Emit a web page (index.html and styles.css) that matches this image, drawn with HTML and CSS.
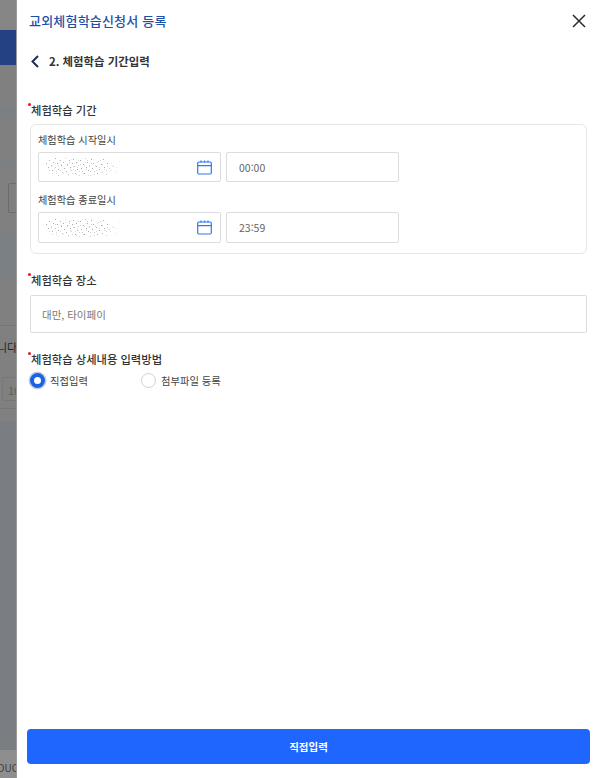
FILE: index.html
```html
<!DOCTYPE html>
<html lang="ko">
<head>
    <meta charset="UTF-8">
    <meta name="viewport" content="width=device-width, initial-scale=1.0">
    <title>교외체험학습신청서 등록</title>
    <link rel="stylesheet" href="styles.css">
</head>
<body>
    <svg class="defs" width="0" height="0">
        <symbol id="noise" viewBox="0 0 80 24">
            <g fill="#8a8a8a">
                <rect x="3" y="8" width="1" height="1"/><rect x="5" y="12" width="1" height="1"/><rect x="6" y="5" width="1" height="1"/>
                <rect x="8" y="10" width="1" height="1" opacity=".6"/><rect x="9" y="15" width="1" height="1"/><rect x="10" y="7" width="1" height="1"/>
                <rect x="12" y="3" width="1" height="1"/><rect x="12" y="12" width="1" height="1" opacity=".7"/><rect x="13" y="18" width="1" height="1" opacity=".5"/>
                <rect x="14" y="8" width="1" height="1"/><rect x="15" y="14" width="1" height="1"/><rect x="17" y="5" width="1" height="1" opacity=".7"/>
                <rect x="18" y="10" width="1" height="1"/><rect x="19" y="17" width="1" height="1" opacity=".6"/><rect x="20" y="7" width="1" height="1"/>
                <rect x="21" y="13" width="1" height="1"/><rect x="22" y="3" width="1" height="1" opacity=".5"/><rect x="23" y="16" width="1" height="1"/>
                <rect x="24" y="9" width="1" height="1"/><rect x="25" y="19" width="1" height="1" opacity=".5"/><rect x="26" y="5" width="1" height="1"/>
                <rect x="27" y="12" width="1" height="1"/><rect x="28" y="15" width="1" height="1" opacity=".6"/><rect x="29" y="8" width="1" height="1"/>
                <rect x="30" y="4" width="1" height="1"/><rect x="31" y="11" width="1" height="1" opacity=".7"/><rect x="32" y="18" width="1" height="1"/>
                <rect x="33" y="7" width="1" height="1"/><rect x="34" y="14" width="1" height="1"/><rect x="35" y="10" width="1" height="1" opacity=".6"/>
                <rect x="36" y="20" width="1" height="1" opacity=".5"/><rect x="37" y="5" width="1" height="1"/><rect x="38" y="13" width="1" height="1"/>
                <rect x="39" y="16" width="1" height="1" opacity=".7"/><rect x="40" y="9" width="1" height="1"/><rect x="41" y="18" width="1" height="1"/>
                <rect x="42" y="3" width="1" height="1" opacity=".6"/><rect x="43" y="12" width="1" height="1"/><rect x="44" y="7" width="1" height="1"/>
                <rect x="45" y="15" width="1" height="1"/><rect x="46" y="10" width="1" height="1" opacity=".6"/><rect x="47" y="20" width="1" height="1" opacity=".5"/>
                <rect x="48" y="4" width="1" height="1"/><rect x="49" y="13" width="1" height="1"/><rect x="50" y="8" width="1" height="1"/>
                <rect x="51" y="16" width="1" height="1" opacity=".7"/><rect x="53" y="11" width="1" height="1"/><rect x="54" y="18" width="1" height="1"/>
                <rect x="55" y="6" width="1" height="1" opacity=".6"/><rect x="56" y="14" width="1" height="1"/><rect x="58" y="9" width="1" height="1"/>
                <rect x="59" y="17" width="1" height="1" opacity=".6"/><rect x="60" y="4" width="1" height="1"/><rect x="61" y="12" width="1" height="1"/>
                <rect x="63" y="15" width="1" height="1" opacity=".5"/><rect x="64" y="8" width="1" height="1"/><rect x="66" y="13" width="1" height="1" opacity=".5"/>
                <rect x="70" y="11" width="1" height="1" opacity=".5"/><rect x="73" y="17" width="1" height="1" opacity=".4"/>
            </g>
        </symbol>
        <symbol id="calendar" viewBox="0 0 15 15">
            <rect x=".7" y="2" width="13.6" height="12" rx="1.2" fill="none" stroke="#2f78f0" stroke-width="1.2"/>
            <path d="M.7 5.6h13.6M4 .6v1.8M7.5 .6v1.8M11 .6v1.8" fill="none" stroke="#2f78f0" stroke-width="1.2"/>
        </symbol>
    </svg>

    <div class="page">
        <div class="backdrop">
            <div class="band band-top"></div>
            <div class="band band-blue"></div>
            <div class="band band-grey h43"></div>
            <div class="band band-cool h12"></div>
            <div class="band band-grey h40"></div>
            <div class="band band-cool h7"></div>
            <div class="band band-grey band-box"><span class="ghost-box"></span></div>
            <div class="band band-cool h46"></div>
            <div class="band band-grey band-text">
                <span class="ghost-line line-one"></span>
                <span class="ghost-text">니다.</span>
                <span class="ghost-input">10</span>
                <span class="ghost-line line-two"></span>
            </div>
            <div class="band band-dark"></div>
            <div class="band band-foot">OUC</div>
        </div>

        <div class="panel">
            <div class="panel-header">
                <h1 class="panel-title">교외체험학습신청서 등록</h1>
                <svg class="icon-close" viewBox="0 0 14 14"><path d="M1 1l12 12M13 1L1 13"/></svg>
            </div>
            <div class="step">
                <svg class="icon-back" viewBox="0 0 8 13"><path d="M7 1L1.5 6.5 7 12"/></svg>
                <span>2. 체험학습 기간입력</span>
            </div>

            <div class="form">
                <div class="label label-period">체험학습 기간</div>
                <div class="card">
                    <div class="sub-label">체험학습 시작일시</div>
                    <div class="input-row">
                        <div class="input date">
                            <svg class="noise"><use href="#noise"/><use class="noise-layer" href="#noise" transform="translate(3 24) scale(1 -1)"/></svg>
                            <svg class="icon-calendar"><use href="#calendar"/></svg>
                        </div>
                        <div class="input time">00:00</div>
                    </div>
                    <div class="sub-label second">체험학습 종료일시</div>
                    <div class="input-row">
                        <div class="input date tall">
                            <svg class="noise"><use href="#noise"/><use class="noise-layer" href="#noise" transform="translate(3 24) scale(1 -1)"/></svg>
                            <svg class="icon-calendar"><use href="#calendar"/></svg>
                        </div>
                        <div class="input time tall">23:59</div>
                    </div>
                </div>

                <div class="label label-place">체험학습 장소</div>
                <div class="input place">대만, 타이페이</div>

                <div class="label label-method">체험학습 상세내용 입력방법</div>
                <div class="radios">
                    <div class="radio-item first"><span class="radio checked"></span>직접입력</div>
                    <div class="radio-item"><span class="radio"></span>첨부파일 등록</div>
                </div>
            </div>

            <button class="submit">직접입력</button>
        </div>
    </div>
</body>
</html>
```

FILE: styles.css
```css
* {
    box-sizing: border-box;
}
html, body {
    height: 100%;
}
body {
    margin: 0;
    font-family: "Noto Sans CJK KR", "Noto Sans", sans-serif;
    background: #fff;
    overflow: hidden;
}
.defs {
    display: none;
}
.page {
    display: flex;
    height: 778px;
}

/* dimmed page behind the drawer */
.backdrop {
    width: 17px;
    flex-shrink: 0;
    display: flex;
    flex-direction: column;
    overflow: hidden;
    border-right: 1px solid #9a9a9a;
}
.band {
    position: relative;
    white-space: nowrap;
}
.band-top {
    height: 30px;
    background: #868686;
}
.band-blue {
    height: 35px;
    background: #234183;
}
.band-grey {
    background: #808080;
}
.band-cool {
    background: #7b8084;
}
.h43 { height: 43px; }
.h12 { height: 12px; }
.h40 { height: 40px; }
.h7 { height: 7px; }
.h46 { height: 46px; }
.band-box {
    height: 65px;
}
.ghost-box {
    position: absolute;
    left: 8px;
    top: 16px;
    width: 20px;
    height: 30px;
    border: 1px solid #6c6c6c;
    border-radius: 2px;
}
.band-text {
    height: 143px;
}
.ghost-line {
    position: absolute;
    left: 0;
    right: 0;
    border-top: 1px solid #767676;
}
.line-one {
    top: 47px;
}
.line-two {
    top: 130px;
}
.ghost-text {
    position: absolute;
    left: -3px;
    top: 61px;
    font-size: 11px;
    color: #252525;
}
.ghost-input {
    position: absolute;
    left: 2px;
    top: 99px;
    width: 30px;
    height: 24px;
    padding-left: 5px;
    font-size: 11px;
    line-height: 24px;
    color: #5c5c5c;
    border: 1px solid #777;
    border-radius: 2px;
}
.band-dark {
    flex: 1;
    background: #7a7e82;
}
.band-foot {
    height: 28px;
    padding-top: 10px;
    font-size: 10px;
    text-indent: -3px;
    color: #3f3f3f;
    background: #8e8e8e;
}

/* drawer */
.panel {
    flex: 1;
    display: flex;
    flex-direction: column;
    padding: 0 10px 14px;
    background: #fff;
}
.panel-header {
    display: flex;
    justify-content: space-between;
    align-items: center;
    height: 42px;
    padding: 0 4px 0 2px;
}
.panel-title {
    margin: -2px 0 0;
    font-size: 13px;
    font-weight: 500;
    letter-spacing: .2px;
    color: #1f50a8;
}
.icon-close {
    width: 14px;
    height: 14px;
    fill: none;
    stroke: #2b2b2b;
    stroke-width: 1.5;
}
.step {
    display: flex;
    align-items: center;
    height: 38px;
    padding-left: 4px;
    font-size: 11.4px;
    font-weight: 700;
    color: #333;
}
.icon-back {
    width: 8px;
    height: 13px;
    margin-right: 10px;
    fill: none;
    stroke: #1c2f4f;
    stroke-width: 2;
}
.form {
    flex: 1;
    padding: 0 3px;
}
.label {
    position: relative;
    padding-left: 1px;
    font-size: 11.3px;
    font-weight: 500;
    line-height: 18px;
    color: #333;
}
.label::before {
    content: "";
    position: absolute;
    left: -2px;
    top: 2px;
    width: 3px;
    height: 3px;
    border-radius: 50%;
    background: #f01020;
}
.label-period {
    margin-top: 21px;
}
.label-place {
    margin-top: 17px;
}
.label-method {
    margin-top: 17px;
}
.card {
    margin-top: 5px;
    height: 130px;
    padding: 7px 7px 0;
    border: 1px solid #e6e6e6;
    border-radius: 6px;
}
.sub-label {
    font-size: 10.2px;
    line-height: 15px;
    color: #444;
}
.sub-label.second {
    margin-top: 10px;
}
.input-row {
    display: flex;
    gap: 5px;
    margin-top: 5px;
}
.input {
    display: flex;
    align-items: center;
    border: 1px solid #dcdcdc;
    border-radius: 2px;
    font-size: 10.5px;
    color: #666;
    background: #fff;
}
.date {
    justify-content: space-between;
    width: 183px;
    height: 30px;
    padding: 0 8px 0 4px;
}
.time {
    width: 173px;
    height: 30px;
    padding-left: 12px;
}
.input.tall {
    height: 31px;
}
.noise {
    width: 80px;
    height: 24px;
    opacity: .7;
    filter: blur(.5px);
}
.noise-layer {
    opacity: .5;
}
.icon-calendar {
    width: 15px;
    height: 15px;
}
.place {
    height: 38px;
    margin-top: 6px;
    padding-left: 11px;
    color: #777;
}
.radios {
    display: flex;
    margin-top: 5px;
    font-size: 10.3px;
    color: #444;
}
.radio-item {
    display: flex;
    align-items: center;
    gap: 5px;
}
.radio-item.first {
    width: 111px;
}
.radio {
    width: 15px;
    height: 15px;
    border: 1px solid #ccd2d8;
    border-radius: 50%;
    background: #fff;
}
.radio.checked {
    border: 4px solid #1a62e8;
    box-shadow: 0 0 0 1.5px #c4cfdc;
}
.submit {
    height: 35px;
    border: none;
    border-radius: 4px;
    background: #1f66ff;
    color: #fff;
    font-family: inherit;
    font-size: 10.5px;
    font-weight: 700;
}
```
